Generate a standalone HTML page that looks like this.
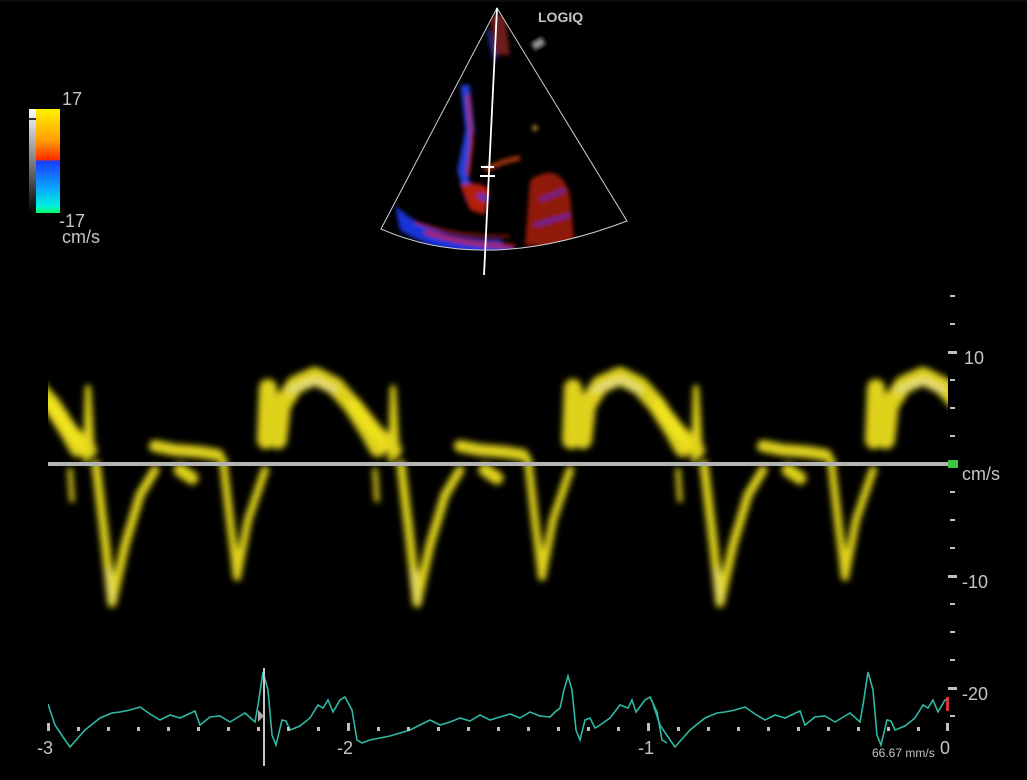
<!DOCTYPE html>
<html><head><meta charset="utf-8"><style>
html,body{margin:0;padding:0;background:#000;width:1027px;height:780px;overflow:hidden}
svg{display:block}
text{font-family:"Liberation Sans",sans-serif;fill:#c4c4c4}
</style></head><body>
<svg width="1027" height="780" viewBox="0 0 1027 780" xmlns="http://www.w3.org/2000/svg">
<defs>
<filter id="b" x="-20%" y="-20%" width="140%" height="140%"><feGaussianBlur stdDeviation="3.2"/></filter>
<filter id="b2" x="-20%" y="-20%" width="140%" height="140%"><feGaussianBlur stdDeviation="2"/></filter>
<linearGradient id="cb" x1="0" y1="0" x2="0" y2="1">
<stop offset="0" stop-color="#fff200"/><stop offset="0.3" stop-color="#ffa000"/><stop offset="0.49" stop-color="#ff2a00"/>
<stop offset="0.5" stop-color="#1a3cff"/><stop offset="0.75" stop-color="#0aa0ff"/><stop offset="0.93" stop-color="#00f0e0"/><stop offset="1" stop-color="#00ff60"/>
</linearGradient>
<linearGradient id="gb" x1="0" y1="0" x2="0" y2="1"><stop offset="0" stop-color="#fff"/><stop offset="1" stop-color="#000"/></linearGradient>
<clipPath id="sec"><path d="M497,8 L381,229 Q485,275 627,221 Z"/></clipPath>
<clipPath id="dop"><rect x="48" y="290" width="900" height="340"/></clipPath>
<clipPath id="ecg"><rect x="48" y="660" width="900" height="110"/></clipPath>
<g id="cyc" fill="none" stroke="#f2e41c" stroke-linecap="round" stroke-linejoin="round" opacity="0.92">
<path d="M50,405 L70,430 L90,450" stroke-width="14"/>
<path d="M86,460 L88,388 L92,455" stroke-width="6"/>
<path d="M70,470 L72,500" stroke-width="5"/>
<path d="M96,465 L105,540 L112,603 L125,545 L140,495 L155,470" stroke-width="9"/>
<path d="M155,446 L175,450 L200,452 L218,455" stroke-width="12"/>
<path d="M180,470 L192,478" stroke-width="13"/>
<path d="M223,460 L230,520 L237,577 L248,520 L265,470" stroke-width="8"/>
<path d="M266,440 L268,388 L272,430 L278,440 L282,405 L295,385 L315,376 L335,386 L352,405 L368,430 L378,448" stroke-width="18"/>
<path d="M290,390 L315,380 L335,390" stroke="#fffbe0" stroke-width="5" opacity="0.6"/>
<path d="M108,570 L112,600" stroke="#fffbe0" stroke-width="3" opacity="0.6"/>
</g>
<path id="ec" fill="none" stroke="#2fb8a4" stroke-width="1.6" d="M48,704 L55,725 L63,737 L70,747 L85,730 L100,718 L112,713 L120,712 L130,710 L140,707 L150,714 L160,720 L170,715 L180,718 L195,711 L200,725 L210,717 L220,716 L230,722 L245,713 L255,722 L258,705 L263,672 L268,690 L272,735 L276,745 L282,720 L286,721 L290,730 L300,726 L310,718 L318,705 L323,708 L328,700 L333,712 L340,700 L345,697 L352,710 L357,740 L362,743 L370,740 L380,738 L390,736 L400,733 L410,730 L420,725 L430,720 L440,725 L450,722 L460,718 L470,721 L480,715 L490,720 L500,717 L510,714 L520,718 L530,712 L540,716 L550,717 L555,712 L560,708 L564,690 L568,676 L572,690 L576,730 L580,740 L585,720 L590,718 L595,728 L600,725 L610,718 L620,705 L628,708 L632,700 L636,712 L645,700 L650,697 L657,712 L662,740 L667,743"/>
</defs>

<rect width="1027" height="780" fill="#000"/>
<rect x="0" y="0" width="1027" height="2" fill="#0c0c0c"/>

<rect x="29" y="109" width="7" height="104" fill="url(#gb)"/>
<rect x="36" y="109" width="24" height="104" fill="url(#cb)"/>
<rect x="29" y="118" width="7" height="2" fill="#333"/>
<text x="62" y="105" font-size="18">17</text>
<text x="59" y="227" font-size="18">-17</text>
<text x="62" y="243" font-size="18">cm/s</text>

<g clip-path="url(#sec)" filter="url(#b2)" opacity="0.85">
<path d="M395,205 Q430,240 500,240 L520,255 Q450,262 400,230 Z" fill="#1a3cff"/>
<path d="M425,232 Q470,246 515,246" stroke="#d82810" stroke-width="4" fill="none"/>
<path d="M415,222 Q460,238 510,236" stroke="#d82810" stroke-width="2" fill="none"/>
<path d="M530,180 Q560,160 570,195 L575,250 L525,245 Z" fill="#c82510" opacity="0.85"/>
<path d="M540,200 L565,190 M535,225 L570,215" stroke="#2233ff" stroke-width="2"/>
<path d="M465,85 L470,130 L462,170 L470,200" stroke="#2a4cff" stroke-width="9" fill="none"/>
<path d="M468,95 L472,140 L468,175" stroke="#d83010" stroke-width="3" fill="none"/>
<path d="M460,185 Q480,180 490,190 L485,215 L470,210 Z" fill="#d02810"/>
<path d="M478,195 L488,200" stroke="#1a3cff" stroke-width="4"/>
<path d="M485,170 Q505,160 520,158" stroke="#c84010" stroke-width="5" fill="none"/>
<path d="M490,15 L505,15 L510,55 L495,55 Z" fill="#802020"/>
<path d="M488,30 L495,60" stroke="#2a40c0" stroke-width="3"/>
<path d="M470,255 L540,255 L540,275 L470,275 Z" fill="#666"/>
<circle cx="535" cy="128" r="3" fill="#c0a020"/>
</g>
<rect x="533" y="40" width="12" height="8" fill="#999" transform="rotate(-30 538 45)" filter="url(#b2)"/>
<path d="M497,8 L381,229 Q485,275 627,221 Z" fill="none" stroke="#d0d0d0" stroke-width="1"/>
<path d="M497,8 L484,275" stroke="#fff" stroke-width="1.8"/>
<path d="M481,167 L494,167 M480,176 L495,176" stroke="#fff" stroke-width="2"/>
<text x="538" y="22" font-size="14" font-weight="bold">LOGIQ</text>

<g clip-path="url(#dop)" filter="url(#b)">
<use href="#cyc"/>
<use href="#cyc" transform="translate(305,0)"/>
<use href="#cyc" transform="translate(608,0)"/>
<use href="#cyc" transform="translate(-300,0)"/>
</g>
<rect x="48" y="462" width="900" height="4" fill="#b4b4b4"/>
<rect x="948" y="460" width="10" height="8" fill="#3cc83c"/>

<g fill="#c0c0c0">
<rect x="950" y="295" width="5" height="2"/><rect x="950" y="323" width="5" height="2"/>
<rect x="948" y="351" width="9" height="3"/><rect x="950" y="379" width="5" height="2"/>
<rect x="950" y="407" width="5" height="2"/><rect x="950" y="435" width="5" height="2"/>
<rect x="950" y="491" width="5" height="2"/><rect x="950" y="519" width="5" height="2"/>
<rect x="950" y="547" width="5" height="2"/><rect x="948" y="575" width="9" height="3"/>
<rect x="950" y="603" width="5" height="2"/><rect x="950" y="631" width="5" height="2"/>
<rect x="950" y="659" width="5" height="2"/><rect x="948" y="687" width="9" height="3"/>
<rect x="950" y="715" width="5" height="2"/>
</g>
<text x="964" y="364" font-size="18">10</text>
<text x="962" y="480" font-size="18">cm/s</text>
<text x="962" y="588" font-size="18">-10</text>
<text x="962" y="700" font-size="18">-20</text>

<g clip-path="url(#ecg)">
<use href="#ec"/>
<use href="#ec" transform="translate(605,0)"/>
</g>
<rect x="263" y="668" width="2" height="98" fill="#c8c8c8"/>
<path d="M258,710 L264,716 L258,722 Z" fill="#aaa"/>
<rect x="946" y="697" width="3" height="14" fill="#e03030"/>

<g fill="#c0c0c0">
<rect x="47" y="723" width="3" height="8"/><rect x="77" y="727" width="3" height="4"/><rect x="107" y="727" width="3" height="4"/>
<rect x="137" y="727" width="3" height="4"/><rect x="167" y="727" width="3" height="4"/><rect x="197" y="727" width="3" height="4"/>
<rect x="227" y="727" width="3" height="4"/><rect x="257" y="727" width="3" height="4"/><rect x="287" y="727" width="3" height="4"/>
<rect x="317" y="727" width="3" height="4"/><rect x="347" y="723" width="3" height="8"/><rect x="377" y="727" width="3" height="4"/>
<rect x="407" y="727" width="3" height="4"/><rect x="437" y="727" width="3" height="4"/><rect x="467" y="727" width="3" height="4"/>
<rect x="497" y="727" width="3" height="4"/><rect x="527" y="727" width="3" height="4"/><rect x="557" y="727" width="3" height="4"/>
<rect x="587" y="727" width="3" height="4"/><rect x="617" y="727" width="3" height="4"/><rect x="647" y="723" width="3" height="8"/>
<rect x="677" y="727" width="3" height="4"/><rect x="707" y="727" width="3" height="4"/><rect x="737" y="727" width="3" height="4"/>
<rect x="767" y="727" width="3" height="4"/><rect x="797" y="727" width="3" height="4"/><rect x="827" y="727" width="3" height="4"/>
<rect x="857" y="727" width="3" height="4"/><rect x="887" y="727" width="3" height="4"/><rect x="917" y="727" width="3" height="4"/>
<rect x="946" y="723" width="3" height="8"/>
</g>
<text x="37" y="754" font-size="18">-3</text>
<text x="337" y="754" font-size="18">-2</text>
<text x="638" y="754" font-size="18">-1</text>
<text x="940" y="754" font-size="18">0</text>
<text x="872" y="757" font-size="12" fill="#aaa">66.67 mm/s</text>
</svg>
</body></html>
